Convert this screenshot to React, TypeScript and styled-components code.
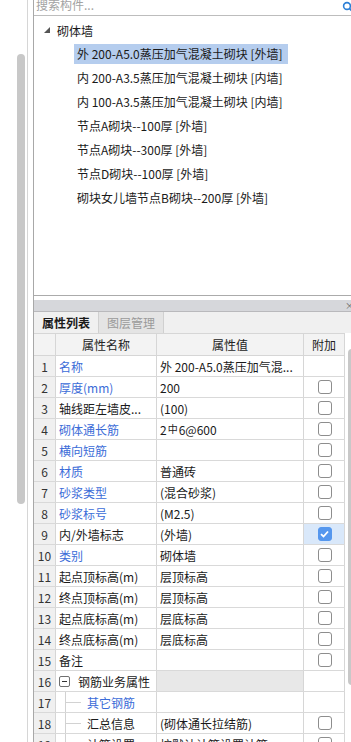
import React from 'react'
import styled, { createGlobalStyle, css } from 'styled-components'

const GlobalStyle = createGlobalStyle`
  html, body {
    margin: 0;
    padding: 0;
    background: #ffffff;
  }
  body {
    font-family: 'Noto Sans CJK SC', 'Noto Sans', 'Liberation Sans', sans-serif;
    font-size: 12px;
    color: #1a1a1a;
  }
`

const Frame = styled.div`
  width: 351px;
  height: 742px;
  overflow: hidden;
  display: flex;
  align-items: flex-start;
  background: #fff;
`

const Gutter = styled.div`
  width: 28px;
  height: 742px;
  flex-shrink: 0;
  box-sizing: border-box;
  border-right: 1px solid #d6d6d6;
  padding-top: 54px;
`

const GutterThumb = styled.div`
  width: 8px;
  height: 450px;
  margin-left: 17px;
  border-radius: 4px;
  background: #c8c8c8;
`

const Main = styled.div`
  margin-left: 5px;
  width: 318px;
  flex-shrink: 0;
  box-sizing: border-box;
  border-left: 1px solid #a8a8a8;
  display: flex;
  flex-direction: column;

  & > * {
    flex-shrink: 0;
  }
`

const SearchBar = styled.div`
  height: 16px;
  box-sizing: border-box;
  border-bottom: 1px solid #bdbdbd;
  display: flex;
  align-items: flex-start;
  justify-content: space-between;
  padding-left: 2px;
`

const Placeholder = styled.span`
  color: #a3a3a3;
  line-height: 12px;
  margin-top: -1px;
`

const SearchIcon = styled.svg`
  margin-top: 1px;
  margin-right: -3px;
  flex-shrink: 0;
`

const TreePanel = styled.div`
  height: 280px;
  box-sizing: border-box;
  border-bottom: 1px solid #ababab;
  padding-top: 4px;
  display: flex;
  flex-direction: column;
  gap: 4px;
`

const TreeGroup = styled.div`
  height: 20px;
  display: flex;
  align-items: center;
  gap: 7px;
  padding-left: 10px;
`

const TreeItem = styled.div<{ $selected?: boolean }>`
  height: 20px;
  line-height: 20px;
  margin-left: 40px;
  padding: 0 5px 0 3px;
  align-self: flex-start;
  white-space: nowrap;
  ${(p) =>
    p.$selected &&
    css`
      background: #b5cdee;
    `}
`

const DockBar = styled.div`
  margin-top: 4px;
  height: 12px;
  box-sizing: border-box;
  background: #d6d7db;
  border-bottom: 1px solid #b9b9bc;
  display: flex;
  justify-content: flex-end;
  align-items: center;
  font-size: 9px;
  color: #666;
  line-height: 10px;
`

const CloseMark = styled.span`
  margin-right: -3px;
`

const TabStrip = styled.div`
  height: 21px;
  background: #f0f0f0;
  display: flex;
`

const Tab = styled.div<{ $active?: boolean }>`
  width: 65px;
  box-sizing: border-box;
  display: flex;
  align-items: center;
  justify-content: center;
  font-size: 12px;
  ${(p) =>
    p.$active
      ? css`
          color: #1a1a1a;
          font-weight: bold;
          border-right: 1px solid #d0d0d0;
        `
      : css`
          color: #9a9a9a;
          background: #e4e4e4;
          border-right: 1px solid #d0d0d0;
        `}
`

const GridArea = styled.div`
  display: flex;
  align-items: flex-start;
`

const Table = styled.div`
  width: 311px;
  flex-shrink: 0;
`

const COLS = '22px 101px 147px 41px'

const HeaderRow = styled.div`
  display: grid;
  grid-template-columns: ${COLS};
  height: 23px;
  box-sizing: border-box;
  border-top: 1px solid #d6d6d6;
  border-bottom: 1px solid #d6d6d6;
  background: #f3f3f3;
`

const HeaderCell = styled.div`
  box-sizing: border-box;
  border-right: 1px solid #d6d6d6;
  display: flex;
  align-items: center;
  justify-content: center;
  color: #222;
`

const Row = styled.div`
  display: grid;
  grid-template-columns: ${COLS};
  height: 21px;
  box-sizing: border-box;
  border-bottom: 1px solid #d9d9d9;
`

const NumCell = styled.div`
  box-sizing: border-box;
  border-right: 1px solid #d6d6d6;
  background: #f0f0f0;
  display: flex;
  align-items: center;
  justify-content: center;
  color: #333;
`

const NameCell = styled.div<{ $blue?: boolean }>`
  box-sizing: border-box;
  border-right: 1px solid #d6d6d6;
  display: flex;
  align-items: center;
  padding-left: 3px;
  white-space: nowrap;
  overflow: hidden;
  color: ${(p) => (p.$blue ? '#3b6cd8' : '#1a1a1a')};
`

const ValueCell = styled.div<{ $shade?: boolean }>`
  box-sizing: border-box;
  border-right: 1px solid #d6d6d6;
  display: flex;
  align-items: center;
  padding-left: 3px;
  white-space: nowrap;
  overflow: hidden;
  text-overflow: ellipsis;
  background: ${(p) => (p.$shade ? '#e8e8e8' : 'transparent')};
`

const ExtraCell = styled.div<{ $active?: boolean }>`
  box-sizing: border-box;
  border-right: 1px solid #d6d6d6;
  display: flex;
  align-items: center;
  justify-content: center;
  background: ${(p) => (p.$active ? '#d9e8fa' : 'transparent')};
`

const Check = styled.span<{ $on?: boolean }>`
  width: 14px;
  height: 14px;
  box-sizing: border-box;
  border-radius: 3px;
  display: flex;
  align-items: center;
  justify-content: center;
  margin-left: 1px;
  ${(p) =>
    p.$on
      ? css`
          background: #5597ee;
          border: 1px solid #5597ee;
        `
      : css`
          background: #fff;
          border: 1px solid #8d8d8d;
        `}
`

const Rebar = styled.span`
  font-size: 10px;
  margin: 0 1px;
  position: relative;
  top: -1px;
`

const MinusBox = styled.span`
  width: 11px;
  height: 11px;
  box-sizing: border-box;
  border: 1px solid #707070;
  border-radius: 2px;
  display: inline-flex;
  align-items: center;
  justify-content: center;
  margin-right: 8px;
  &::after {
    content: '';
    width: 5px;
    height: 1px;
    background: #333;
  }
`

const Connector = styled.span`
  width: 16px;
  height: 20px;
  margin-left: 6px;
  margin-right: 6px;
  flex-shrink: 0;
  background:
    linear-gradient(#d2d2d2, #d2d2d2) left top / 1px 100% no-repeat,
    linear-gradient(#d2d2d2, #d2d2d2) left center / 100% 1px no-repeat;
`

const TableScroll = styled.div`
  width: 8px;
  height: 336px;
  margin-top: 16px;
  margin-left: 3px;
  flex-shrink: 0;
  border-radius: 4px;
  background: #c8c8c8;
`

type Prop = {
  name: string
  value?: React.ReactNode
  blue?: boolean
  check?: 'none' | 'off' | 'on'
  kind?: 'group' | 'child'
}

const props: Prop[] = [
  { name: '名称', value: '外 200-A5.0蒸压加气混...', blue: true, check: 'none' },
  { name: '厚度(mm)', value: '200', blue: true },
  { name: '轴线距左墙皮...', value: '(100)' },
  {
    name: '砌体通长筋',
    value: (
      <>
        2<Rebar>中</Rebar>6@600
      </>
    ),
    blue: true
  },
  { name: '横向短筋', blue: true },
  { name: '材质', value: '普通砖', blue: true },
  { name: '砂浆类型', value: '(混合砂浆)', blue: true },
  { name: '砂浆标号', value: '(M2.5)', blue: true },
  { name: '内/外墙标志', value: '(外墙)', check: 'on' },
  { name: '类别', value: '砌体墙', blue: true },
  { name: '起点顶标高(m)', value: '层顶标高' },
  { name: '终点顶标高(m)', value: '层顶标高' },
  { name: '起点底标高(m)', value: '层底标高' },
  { name: '终点底标高(m)', value: '层底标高' },
  { name: '备注' },
  { name: '钢筋业务属性', kind: 'group', check: 'none' },
  { name: '其它钢筋', kind: 'child', blue: true, check: 'none' },
  { name: '汇总信息', value: '(砌体通长拉结筋)', kind: 'child' },
  { name: '计算设置', value: '按默认计算设置计算', kind: 'child' }
]

const treeItems = [
  '外 200-A5.0蒸压加气混凝土砌块 [外墙]',
  '内 200-A3.5蒸压加气混凝土砌块 [内墙]',
  '内 100-A3.5蒸压加气混凝土砌块 [内墙]',
  '节点A砌块--100厚 [外墙]',
  '节点A砌块--300厚 [外墙]',
  '节点D砌块--100厚 [外墙]',
  '砌块女儿墙节点B砌块--200厚 [外墙]'
]

function CheckMark() {
  return (
    <svg width='9' height='8' viewBox='0 0 9 8'>
      <path d='M1 4.2 L3.5 6.5 L8 1.5' fill='none' stroke='#fff' strokeWidth='1.8' />
    </svg>
  )
}

export default function App() {
  return (
    <>
      <GlobalStyle />
      <Frame>
        <Gutter>
          <GutterThumb />
        </Gutter>
        <Main>
          <SearchBar>
            <Placeholder>搜索构件...</Placeholder>
            <SearchIcon width='12' height='12' viewBox='0 0 12 12'>
              <circle cx='5' cy='5' r='3.4' fill='none' stroke='#2b7fd6' strokeWidth='1.6' />
              <path d='M7.5 7.5 L10.5 10.5' stroke='#2b7fd6' strokeWidth='1.8' />
            </SearchIcon>
          </SearchBar>
          <TreePanel>
            <TreeGroup>
              <svg width='6' height='6' viewBox='0 0 6 6'>
                <polygon points='6,0 6,6 0,6' fill='#555' />
              </svg>
              <span>砌体墙</span>
            </TreeGroup>
            {treeItems.map((t, i) => (
              <TreeItem key={t} $selected={i === 0}>
                {t}
              </TreeItem>
            ))}
          </TreePanel>
          <DockBar>
            <CloseMark>×</CloseMark>
          </DockBar>
          <TabStrip>
            <Tab $active>属性列表</Tab>
            <Tab>图层管理</Tab>
          </TabStrip>
          <GridArea>
            <Table>
              <HeaderRow>
                <HeaderCell />
                <HeaderCell>属性名称</HeaderCell>
                <HeaderCell>属性值</HeaderCell>
                <HeaderCell>附加</HeaderCell>
              </HeaderRow>
              {props.map((p, i) => {
                const check = p.check ?? 'off'
                return (
                  <Row key={p.name}>
                    <NumCell>{i + 1}</NumCell>
                    <NameCell $blue={p.blue}>
                      {p.kind === 'group' && <MinusBox />}
                      {p.kind === 'child' && <Connector />}
                      {p.name}
                    </NameCell>
                    <ValueCell $shade={p.kind === 'group'}>{p.value}</ValueCell>
                    <ExtraCell $active={check === 'on'}>
                      {check === 'off' && <Check />}
                      {check === 'on' && (
                        <Check $on>
                          <CheckMark />
                        </Check>
                      )}
                    </ExtraCell>
                  </Row>
                )
              })}
            </Table>
            <TableScroll />
          </GridArea>
        </Main>
      </Frame>
    </>
  )
}
